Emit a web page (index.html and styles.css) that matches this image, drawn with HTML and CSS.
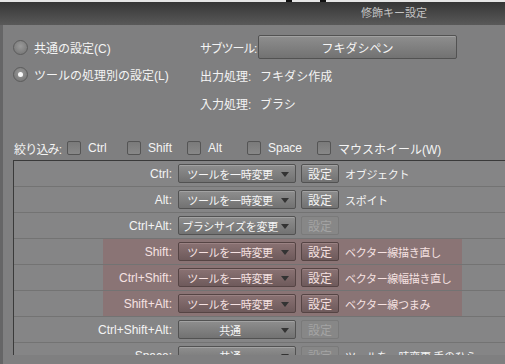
FILE: index.html
```html
<!DOCTYPE html>
<html lang="ja">
<head>
    <meta charset="UTF-8">
    <title>修飾キー設定</title>
    <link rel="stylesheet" href="styles.css">
</head>
<body>

    <!-- Rest vom Fenster darüber -->
    <div class="strip"><span class="mark m1"></span><span class="mark m2"></span></div>

    <!-- Titelleiste -->
    <div class="titlebar"><span class="title">修飾キー設定</span></div>

    <div class="dialog">
        <!-- Modus und Werkzeug -->
        <div class="top">
            <div class="modes">
                <div class="radio"><span class="dot"></span>共通の設定(C)</div>
                <div class="radio"><span class="dot on"></span>ツールの処理別の設定(L)</div>
            </div>
            <div class="info">
                <div class="info-row"><span class="info-label narrow">サブツール:</span><span class="btn subtool">フキダシペン</span></div>
                <div class="info-row"><span class="info-label">出力処理:</span><span class="info-value">フキダシ作成</span></div>
                <div class="info-row"><span class="info-label">入力処理:</span><span class="info-value">ブラシ</span></div>
            </div>
        </div>

        <!-- Filter -->
        <div class="filter">
            <span class="filter-label">絞り込み:</span>
            <div class="chk"><span class="box"></span>Ctrl</div>
            <div class="chk"><span class="box"></span>Shift</div>
            <div class="chk"><span class="box"></span>Alt</div>
            <div class="chk wide"><span class="box"></span>Space</div>
            <div class="chk last"><span class="box"></span>マウスホイール(W)</div>
        </div>

        <!-- Tastenliste -->
        <div class="keys">
            <div class="row">
                <span class="key">Ctrl:</span>
                <span class="btn select">ツールを一時変更</span>
                <span class="btn set">設定</span>
                <span class="desc">オブジェクト</span>
            </div>
            <div class="row">
                <span class="key">Alt:</span>
                <span class="btn select">ツールを一時変更</span>
                <span class="btn set">設定</span>
                <span class="desc">スポイト</span>
            </div>
            <div class="row">
                <span class="key">Ctrl+Alt:</span>
                <span class="btn select">ブラシサイズを変更</span>
                <span class="btn set off">設定</span>
            </div>
            <div class="row hl">
                <span class="key">Shift:</span>
                <span class="btn select">ツールを一時変更</span>
                <span class="btn set">設定</span>
                <span class="desc">ベクター線描き直し</span>
            </div>
            <div class="row hl">
                <span class="key">Ctrl+Shift:</span>
                <span class="btn select">ツールを一時変更</span>
                <span class="btn set">設定</span>
                <span class="desc">ベクター線幅描き直し</span>
            </div>
            <div class="row hl">
                <span class="key">Shift+Alt:</span>
                <span class="btn select">ツールを一時変更</span>
                <span class="btn set">設定</span>
                <span class="desc">ベクター線つまみ</span>
            </div>
            <div class="row">
                <span class="key">Ctrl+Shift+Alt:</span>
                <span class="btn select">共通</span>
                <span class="btn set off">設定</span>
            </div>
            <div class="row">
                <span class="key">Space:</span>
                <span class="btn select">共通</span>
                <span class="btn set off">設定</span>
                <span class="desc">ツールを一時変更:手のひら</span>
            </div>
        </div>
    </div>

</body>
</html>
```

FILE: styles.css
```css
body {
    margin: 0;
    width: 505px;
    height: 364px;
    overflow: hidden;
    background-color: #7f7f80;
    font-family: "Liberation Sans", "Noto Sans CJK JP", sans-serif;
    font-size: 12px;
    color: #f4f4f4;
    white-space: nowrap;
}

/* Streifen oben */
.strip {
    position: relative;
    height: 2px;
    background-color: #e6e6e6;
}

.mark {
    position: absolute;
    top: 0;
    width: 6px;
    height: 2px;
    background-color: #111;
}

.m1 { left: 286px; }
.m2 { left: 320px; }

/* Titelleiste */
.titlebar {
    height: 23px;
    background: linear-gradient(#363636, #595959);
    line-height: 23px;
    padding-left: 361px;
    color: #c4c4c4;
    font-size: 11px;
}

/* Dialog */
.dialog {
    box-sizing: border-box;
    height: 339px;
    border-left: 3px solid #656566;
    padding: 9px 0 0 10px;
}

.top {
    display: flex;
}

.modes {
    width: 187px;
    flex-shrink: 0;
    display: flex;
    flex-direction: column;
    gap: 1px;
}

.radio {
    height: 26px;
    display: flex;
    align-items: center;
    gap: 6px;
}

.dot {
    box-sizing: border-box;
    width: 15px;
    height: 15px;
    border-radius: 50%;
    border: 1px solid #5c5c5c;
    background: radial-gradient(circle at 50% 40%, #9a9a9a, #707070);
    display: flex;
    align-items: center;
    justify-content: center;
}

.dot.on::after {
    content: "";
    width: 5px;
    height: 5px;
    border-radius: 50%;
    background-color: #fafafa;
}

.info {
    display: flex;
    flex-direction: column;
    gap: 2px;
}

.info-row {
    height: 26px;
    display: flex;
    align-items: center;
}

.info-label {
    width: 58px;
    flex-shrink: 0;
}

.info-label.narrow {
    letter-spacing: -1.2px;
}

.info-value {
    padding-left: 2px;
}

/* Knöpfe */
.btn {
    box-sizing: border-box;
    height: 19px;
    flex-shrink: 0;
    display: flex;
    align-items: center;
    justify-content: center;
    overflow: hidden;
    border: 1px solid #525252;
    border-radius: 2px;
    background: linear-gradient(#8e8e8e, #727272);
    box-shadow: inset 0 1px 0 #a2a2a2;
    color: #f6f6f6;
}

.subtool {
    width: 199px;
    height: 24px;
}

/* Filter */
.filter {
    margin-top: 23px;
    height: 18px;
    display: flex;
    align-items: center;
}

.filter-label {
    width: 53px;
    padding-left: 1px;
    flex-shrink: 0;
    letter-spacing: -0.8px;
}

.chk {
    width: 60px;
    flex-shrink: 0;
    display: flex;
    align-items: center;
    gap: 7px;
}

.chk.wide {
    width: 70px;
}

.chk.last {
    width: auto;
}

.box {
    box-sizing: border-box;
    width: 14px;
    height: 14px;
    border: 1px solid #555;
    border-radius: 2px;
    background: linear-gradient(#7a7a7a, #888);
}

/* Tastenliste */
.keys {
    margin-top: 3px;
    height: 194px;
    overflow: hidden;
    border-top: 1px solid #3a3a3a;
    border-left: 1px solid #3a3a3a;
    background-color: #858586;
}

.row {
    box-sizing: border-box;
    height: 26px;
    display: flex;
    align-items: center;
    border-bottom: 1px solid #737373;
}

.row.hl {
    background: linear-gradient(to right, transparent 89px, #8a7475 89px, #8a7475 448px, transparent 448px);
    color: #f6e2e2;
}

.key {
    width: 158px;
    flex-shrink: 0;
    text-align: right;
}

.select {
    position: relative;
    width: 118px;
    margin-left: 6px;
    padding-right: 14px;
    font-size: 11px;
    letter-spacing: -0.3px;
}

.select::after {
    content: "";
    position: absolute;
    right: 6px;
    top: 7px;
    border-top: 5px solid #333;
    border-left: 4px solid transparent;
    border-right: 4px solid transparent;
}

.set {
    width: 38px;
    margin-left: 5px;
}

.set.off {
    background: #878787;
    border-color: #7a7a7a;
    box-shadow: none;
    color: #a4a4a4;
}

.hl .btn {
    background: linear-gradient(#8a7273, #6e5a5b);
    border-color: #554444;
    box-shadow: inset 0 1px 0 #9a8283;
    color: #f6e2e2;
}

.desc {
    margin-left: 6px;
    font-size: 11px;
    letter-spacing: -0.3px;
}
```
